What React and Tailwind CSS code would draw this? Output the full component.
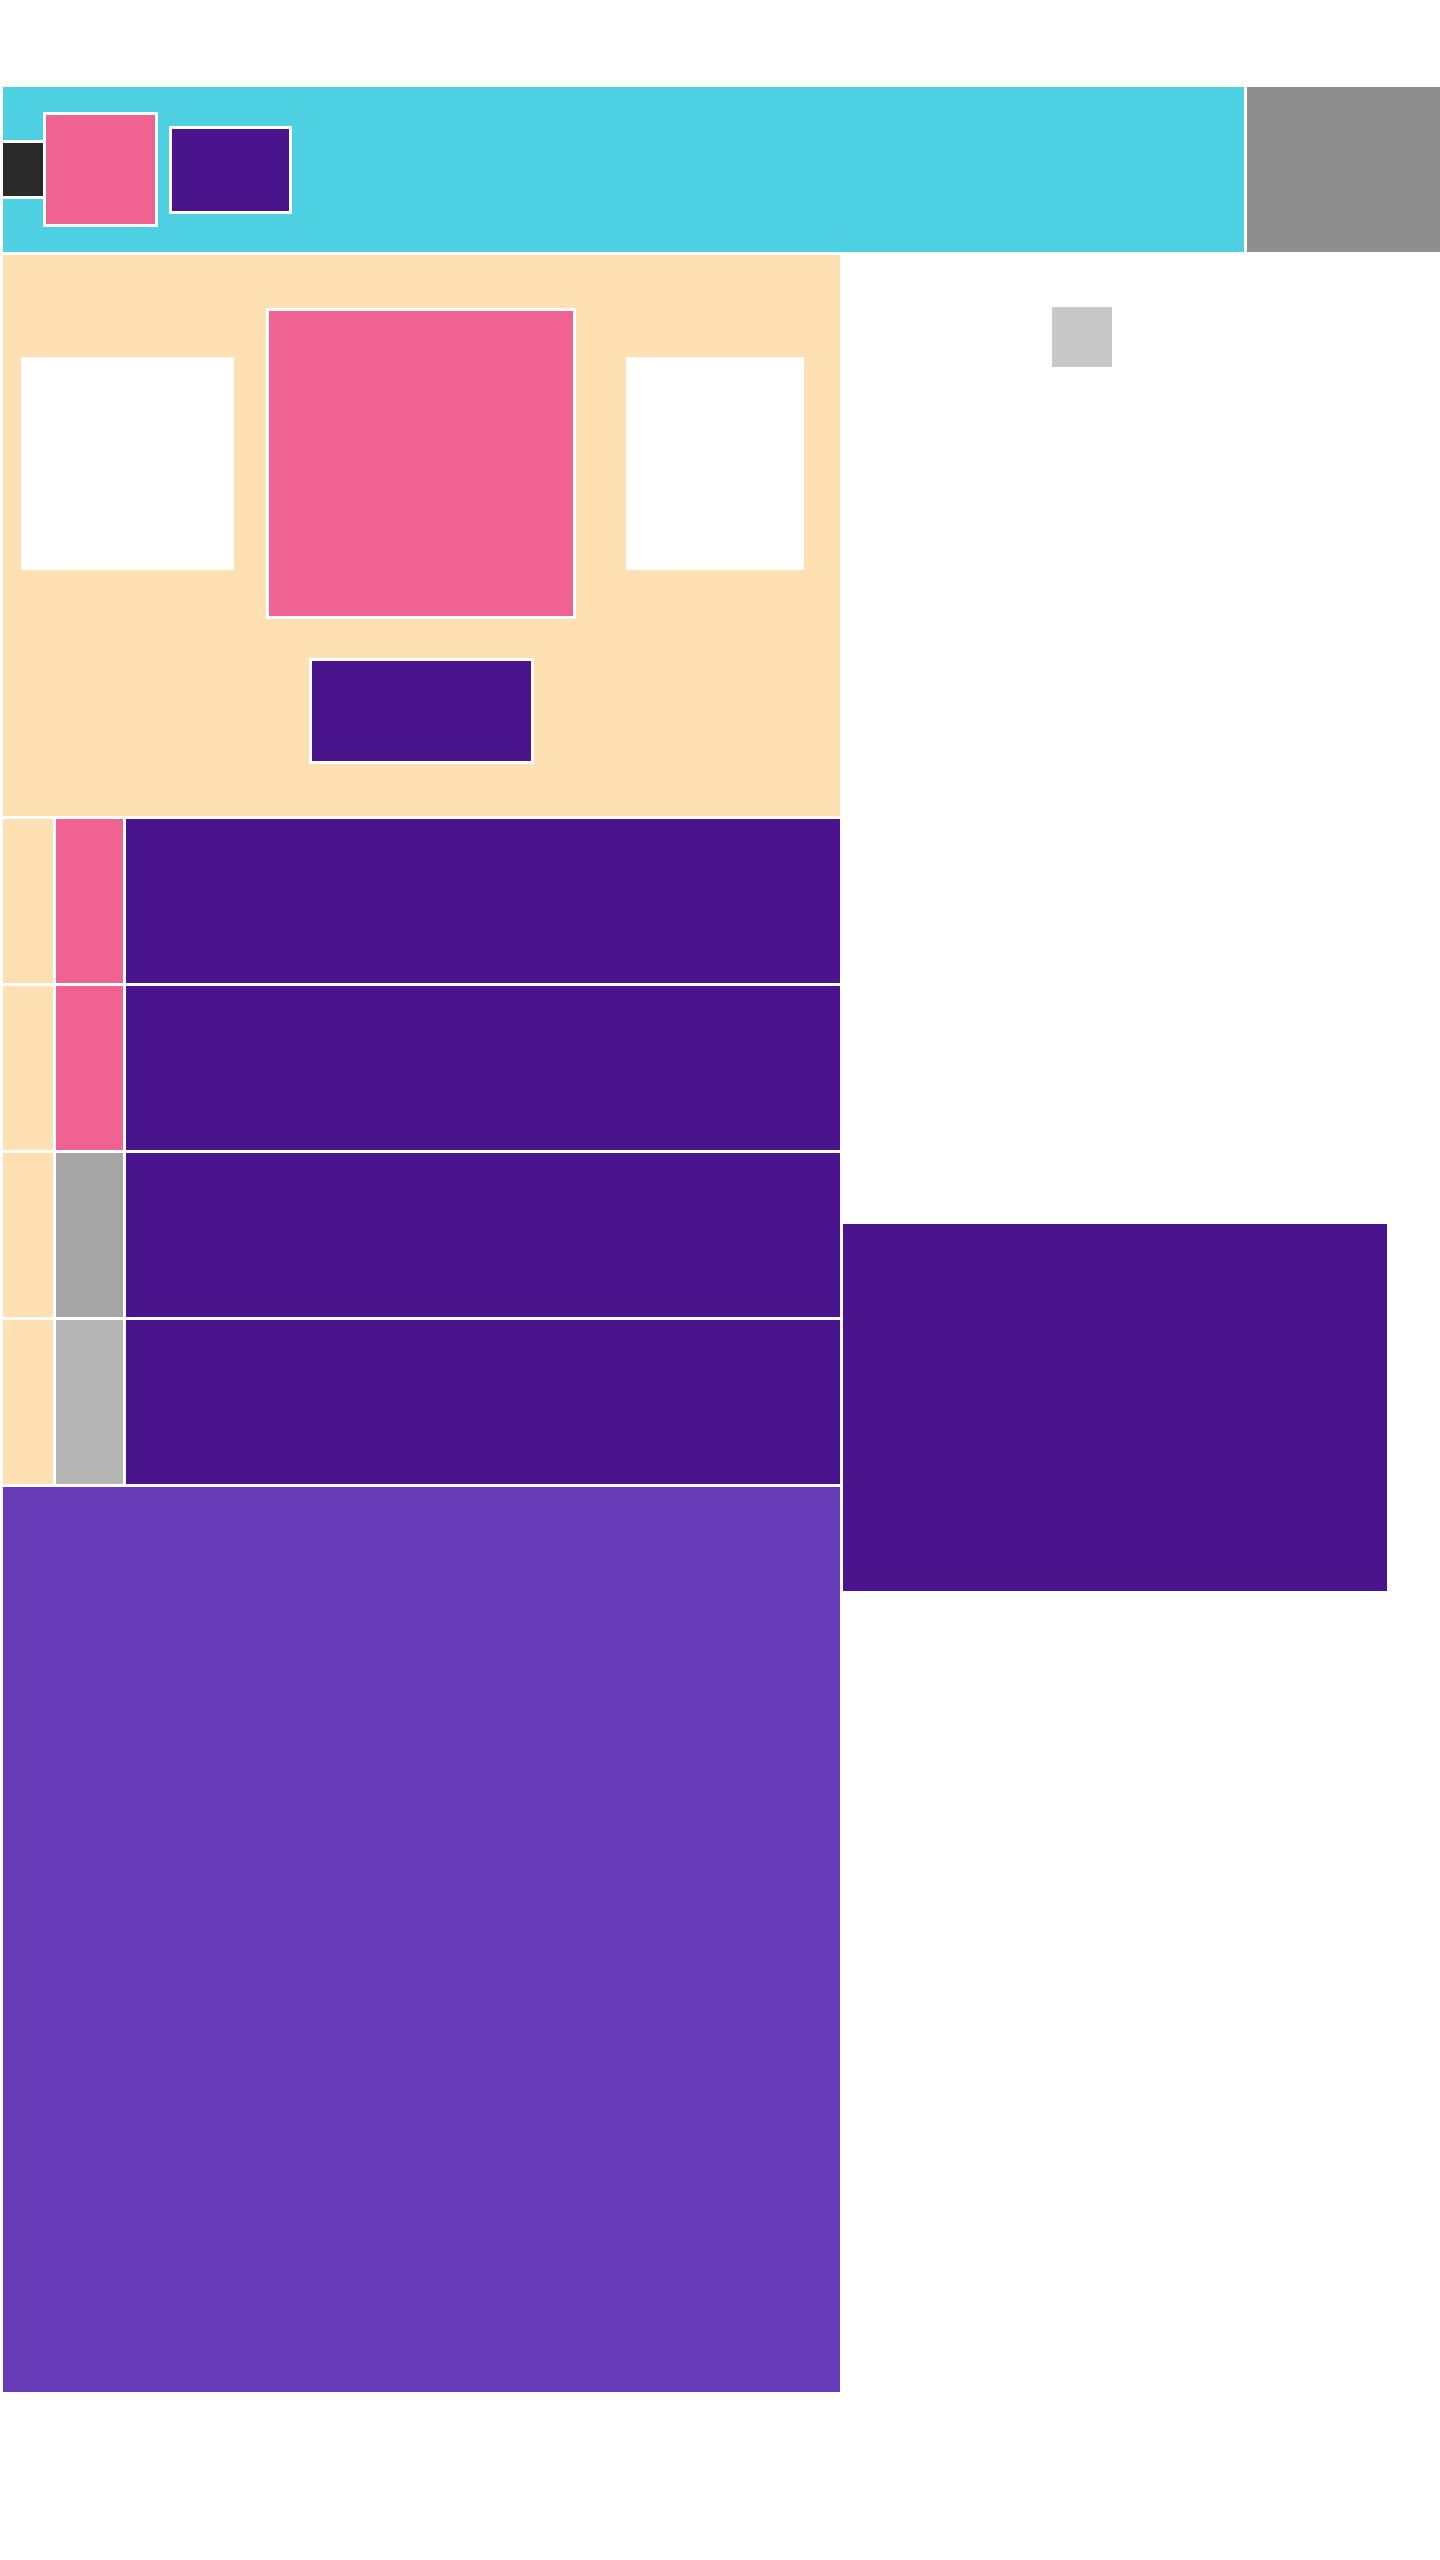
const ROWS = [
  { swatch: 'bg-[#f06292]' },
  { swatch: 'bg-[#f06292]' },
  { swatch: 'bg-[#a6a6a6]' },
  { swatch: 'bg-[#b5b5b5]' },
];

function Header() {
  return (
    <div className="flex gap-[3px] h-[165px]">
      <div className="flex-1 bg-[#4dd0e1] flex items-center">
        <div className="ml-[-3px] w-[46px] h-[59px] bg-[#2a2a2a] border-[3px] border-white" />
        <div className="ml-[-3px] w-[115px] h-[115px] bg-[#f06292] border-[3px] border-white" />
        <div className="ml-[11px] w-[123px] h-[88px] bg-[#4a148c] border-[3px] border-white" />
      </div>
      <div className="w-[193px] bg-[#8e8e8e]" />
    </div>
  );
}

function Hero() {
  return (
    <div className="h-[561px] bg-[#ffe0b2] pt-[53px]">
      <div className="flex items-center pl-[18px]">
        <div className="w-[213px] h-[213px] bg-white" />
        <div className="ml-[32px] w-[310px] h-[311px] bg-[#f06292] border-[3px] border-white" />
        <div className="ml-[50px] w-[178px] h-[213px] bg-white" />
      </div>
      <div className="mt-[39px] ml-[306px] w-[225px] h-[106px] bg-[#4a148c] border-[3px] border-white" />
    </div>
  );
}

function Row({ swatch }) {
  return (
    <div className="flex gap-[3px] h-[164px]">
      <div className="w-[50px] bg-[#ffe0b2]" />
      <div className={`w-[67px] ${swatch}`} />
      <div className="flex-1 bg-[#4a148c]" />
    </div>
  );
}

export default function App() {
  return (
    <div className="min-h-[2560px] bg-white pt-[87px] pl-[3px]">
      <Header />
      <div className="flex gap-[3px] mt-[3px]">
        <div className="w-[837px] flex flex-col gap-[3px]">
          <Hero />
          {ROWS.map((r, i) => (
            <Row key={i} swatch={r.swatch} />
          ))}
          <div className="h-[905px] bg-[#673ab7]" />
        </div>
        <div className="flex-1">
          <div className="mt-[52px] ml-[209px] w-[60px] h-[60px] bg-[#c8c8c8]" />
          <div className="mt-[857px] w-[544px] h-[367px] bg-[#4a148c]" />
        </div>
      </div>
    </div>
  );
}
